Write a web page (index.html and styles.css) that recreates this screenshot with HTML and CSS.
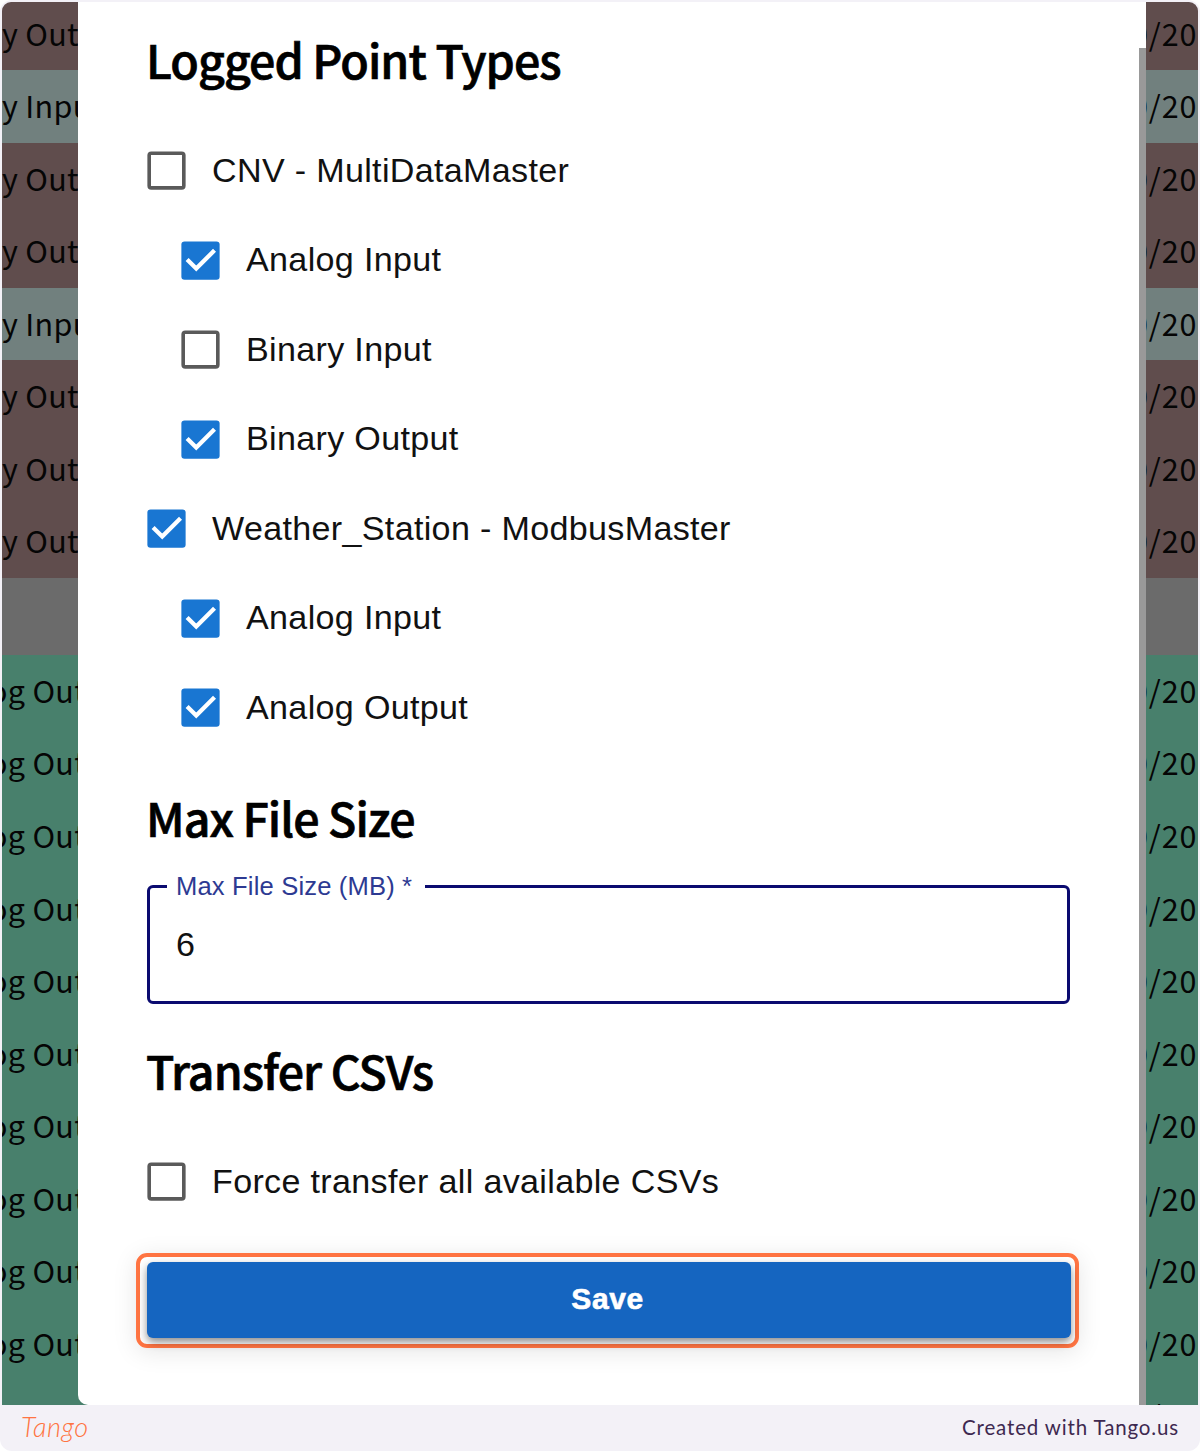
FILE: index.html
```
<!DOCTYPE html>
<html lang="en">
<head>
<meta charset="utf-8">
<title>Logged Point Types</title>
<link rel="stylesheet" href="styles.css">
</head>
<body>
<svg class="defs" width="0" height="0" aria-hidden="true">
  <symbol id="off" viewBox="0 0 24 24"><rect x="3.850" y="3.850" width="16.300" height="16.300" rx="1" fill="none" stroke="#5a5a5a" stroke-width="1.700"/></symbol>
  <symbol id="on" viewBox="0 0 24 24"><rect x="3" y="3" width="18" height="18" rx="1.500" fill="#1976d2"/><path d="M5.700 11.500 10 15.800 18.600 7.200" fill="none" stroke="#fff" stroke-width="2"/></symbol>
</svg>
<div class="frame">
  <main class="shot">
    <div class="table">
      <div class="row out"><span class="kind">y Out</span><span class="date">0/202</span></div>
      <div class="row in"><span class="kind">y Inpu</span><span class="date">0/202</span></div>
      <div class="row out"><span class="kind">y Out</span><span class="date">0/202</span></div>
      <div class="row out"><span class="kind">y Out</span><span class="date">0/202</span></div>
      <div class="row in"><span class="kind">y Inpu</span><span class="date">0/202</span></div>
      <div class="row out"><span class="kind">y Out</span><span class="date">0/202</span></div>
      <div class="row out"><span class="kind">y Out</span><span class="date">0/202</span></div>
      <div class="row out"><span class="kind">y Out</span><span class="date">0/202</span></div>
      <div class="row gap"></div>
      <div class="row analog"><span class="kind">og Out</span><span class="date">0/202</span></div>
      <div class="row analog"><span class="kind">og Out</span><span class="date">0/202</span></div>
      <div class="row analog"><span class="kind">og Out</span><span class="date">0/202</span></div>
      <div class="row analog"><span class="kind">og Out</span><span class="date">0/202</span></div>
      <div class="row analog"><span class="kind">og Out</span><span class="date">0/202</span></div>
      <div class="row analog"><span class="kind">og Out</span><span class="date">0/202</span></div>
      <div class="row analog"><span class="kind">og Out</span><span class="date">0/202</span></div>
      <div class="row analog"><span class="kind">og Out</span><span class="date">0/202</span></div>
      <div class="row analog"><span class="kind">og Out</span><span class="date">0/202</span></div>
      <div class="row analog"><span class="kind">og Out</span><span class="date">0/202</span></div>
      <div class="row analog"><span class="kind">og Out</span><span class="date">0/202</span></div>
    </div>
    <section class="dialog">
      <div class="content">
        <h2 class="types">Logged Point Types</h2>
        <div class="options">
          <label class="option"><svg class="box"><use href="#off"/></svg><span>CNV - MultiDataMaster</span></label>
          <label class="option child"><svg class="box"><use href="#on"/></svg><span>Analog Input</span></label>
          <label class="option child"><svg class="box"><use href="#off"/></svg><span>Binary Input</span></label>
          <label class="option child"><svg class="box"><use href="#on"/></svg><span>Binary Output</span></label>
          <label class="option"><svg class="box"><use href="#on"/></svg><span>Weather_Station - ModbusMaster</span></label>
          <label class="option child"><svg class="box"><use href="#on"/></svg><span>Analog Input</span></label>
          <label class="option child"><svg class="box"><use href="#on"/></svg><span>Analog Output</span></label>
        </div>
        <h2 class="size">Max File Size</h2>
        <fieldset class="field"><legend>Max File Size (MB) *</legend><span class="value">6</span></fieldset>
        <h2 class="transfer">Transfer CSVs</h2>
        <label class="option"><svg class="box"><use href="#off"/></svg><span>Force transfer all available CSVs</span></label>
        <div class="highlight"><button class="save" type="button">Save</button></div>
      </div>
      <div class="scrollbar"></div>
    </section>
  </main>
  <footer class="footer"><span class="logo">Tango</span><span class="credit">Created with Tango.us</span></footer>
</div>
</body>
</html>
```
FILE: styles.css
```
* { box-sizing: border-box; }
body { margin: 0; background: #fff; }
.defs { display: block; }
.frame { height: 1451px; padding: 2px 2px 0; background: #f3f1f7; border-radius: 12px; overflow: hidden; }
.shot { position: relative; height: 1403px; border-radius: 9px 9px 0 0; overflow: hidden; }
.table { margin-top: -4.5px; font-family: "Noto Sans CJK JP", sans-serif; font-size: 30.5px; line-height: 71.5px; color: #050505; }
.row { display: flex; justify-content: space-between; height: 72.55px; white-space: nowrap; }
.out { background: #604d4d; }
.in { background: #71807e; }
.analog { height: 72.55px; line-height: 71px; background: #48806c; }
.gap { height: 77px; background: #6b6b6b; }
.kind { width: 76px; overflow: hidden; letter-spacing: .3px; }
.analog .kind { text-indent: -13px; }
.date { width: 52px; overflow: hidden; text-indent: -15px; letter-spacing: .9px; }
.dialog { position: absolute; left: 76px; top: 0; width: 1068px; height: 1403px; display: flex; background: #fff; border-bottom-left-radius: 10px; }
.content { flex: 1; padding: 27px 58px 0 58px; }
.scrollbar { width: 7px; margin-top: 46px; background: #999; }
h2 { margin: 0 0 0 10px; font: 500 46.5px/60px "Noto Sans CJK JP", sans-serif; letter-spacing: -.95px; -webkit-text-stroke: .7px #000; color: #000; white-space: nowrap; }
.options { margin-top: 37px; }
.option { display: flex; align-items: center; height: 89.5px; padding-left: 5px; font: 34.1px/50px "Liberation Sans", Arial, sans-serif; letter-spacing: .33px; color: #111; white-space: nowrap; }
.option span { padding-bottom: 2px; }
.child { padding-left: 39px; }
.box { width: 51px; height: 51px; margin-right: 20px; }
.size { margin-top: 34px; }
.field { width: 923px; height: 132px; margin: 25px 0 0 11px; padding: 0 26px; border: 3px solid #0b0b70; border-radius: 6px; font: 34.1px/86px "Liberation Sans", Arial, sans-serif; color: #111; }
.field legend { margin-left: -9px; padding: 0 13px 2px 9px; font-size: 25.6px; line-height: 28px; letter-spacing: .15px; color: #2d3a92; }
.value { display: block; margin-top: -1px; }
.transfer { margin-top: 36px; margin-bottom: 37px; }
.transfer + .option span { padding-bottom: 0; }
.highlight { width: 943px; height: 95px; margin-top: 27px; padding: 5px 4px 5px 7px; border: 4px solid #ff7442; border-radius: 11px; box-shadow: 0 4px 24px rgba(0,0,0,.1); }
.save { display: block; width: 924px; height: 76px; padding: 0 3px 2px 0; border: 0; border-radius: 6px; background: #1565c0; box-shadow: 0 4px 8px rgba(0,0,0,.45); font: bold 30px/70px "Liberation Sans", Arial, sans-serif; letter-spacing: .6px; -webkit-text-stroke: .6px #fff; color: #fff; }
.footer { display: flex; justify-content: space-between; align-items: center; height: 46px; padding: 0 19px 2px 19px; }
.logo { font: italic 300 27px/40px Lato, sans-serif; letter-spacing: .6px; color: #ff7442; }
.credit { font: 20.5px/40px Lato, sans-serif; letter-spacing: .85px; color: #3e2950; }
```
